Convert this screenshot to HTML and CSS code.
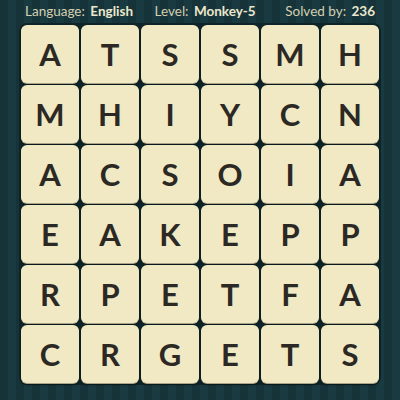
FILE: index.html
```html
<!DOCTYPE html>
<html>
<head>
<meta charset="utf-8">
<link rel="stylesheet" href="styles.css">
</head>
<body>
<div class="page">
  <div class="header">
    <span class="item">Language: <b>English</b></span>
    <span class="item mid">Level: <b>Monkey-5</b></span>
    <span class="item">Solved by: <b>236</b></span>
  </div>
  <div class="board">
    <div class="tile">A</div><div class="tile">T</div><div class="tile">S</div><div class="tile">S</div><div class="tile">M</div><div class="tile">H</div>
    <div class="tile">M</div><div class="tile">H</div><div class="tile">I</div><div class="tile">Y</div><div class="tile">C</div><div class="tile">N</div>
    <div class="tile">A</div><div class="tile">C</div><div class="tile">S</div><div class="tile">O</div><div class="tile">I</div><div class="tile">A</div>
    <div class="tile">E</div><div class="tile">A</div><div class="tile">K</div><div class="tile">E</div><div class="tile">P</div><div class="tile">P</div>
    <div class="tile">R</div><div class="tile">P</div><div class="tile">E</div><div class="tile">T</div><div class="tile">F</div><div class="tile">A</div>
    <div class="tile">C</div><div class="tile">R</div><div class="tile">G</div><div class="tile">E</div><div class="tile">T</div><div class="tile">S</div>
  </div>
</div>
</body>
</html>
```
FILE: styles.css
```css
html, body {
  margin: 0;
  padding: 0;
}
body {
  width: 400px;
  height: 400px;
  overflow: hidden;
  background: #17343a;
  background-image: repeating-linear-gradient(90deg, #16333a 0px, #16333a 8px, #1a3a41 8px, #1a3a41 16px);
  font-family: Lato, "Open Sans", sans-serif;
}
.page {
  display: flex;
  flex-direction: column;
  align-items: center;
}
.header {
  width: 350px;
  height: 23px;
  display: flex;
  justify-content: space-between;
  align-items: center;
  color: #d3d0b0;
  font-size: 13.5px;
  box-sizing: border-box;
  padding-bottom: 2px;
}
.header .mid {
  margin-left: -8px;
}
.header b {
  font-weight: 700;
  color: #ece8cc;
  margin-left: 2px;
}
.board {
  display: grid;
  grid-template-columns: repeat(6, 58px);
  grid-auto-rows: 58px;
  gap: 2px;
  padding: 2px;
  background: #0e2428;
  border-radius: 8px;
}
.tile {
  background: #f0e9c4;
  border-radius: 6px;
  box-shadow: 0 1px 0 #a9a289, 0 2px 2px rgba(0,0,0,0.45);
  display: flex;
  align-items: center;
  justify-content: center;
  color: #2c2823;
  font-size: 31px;
  font-weight: 700;
  line-height: 1;
}
```
